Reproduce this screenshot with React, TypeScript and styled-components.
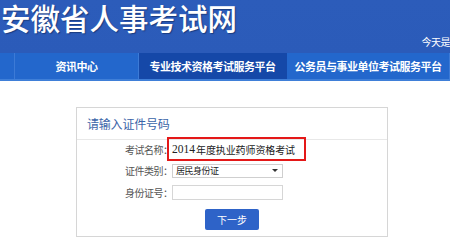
import React from "react";
import styled, { createGlobalStyle } from "styled-components";

const Global = createGlobalStyle`
  html, body { margin: 0; padding: 0; background: #fff; }
  body { width: 450px; height: 249px; overflow: hidden; font-family: "Noto Sans CJK SC", "Noto Sans", sans-serif; }
`;

const Header = styled.div`
  height: 53px;
  background: linear-gradient(180deg, #2c5cba 0%, #2b5bb9 100%);
  position: relative;
  display: flex;
  align-items: flex-start;
`;

const Title = styled.div`
  margin: 0 0 0 1px;
  font-size: 29.5px;
  line-height: 35px;
  color: #fff;
  font-weight: 500;
  text-shadow: 1px 1px 1px #1b3c80;
  white-space: nowrap;
`;

const DateText = styled.div`
  position: absolute;
  right: 0;
  top: 36px;
  font-size: 10px;
  letter-spacing: -0.5px;
  line-height: 12px;
  color: #fff;
  white-space: nowrap;
`;

const Nav = styled.div`
  height: 26px;
  background: #2367cc;
  border-bottom: 2px solid #3f7fd8;
  display: flex;
  overflow: hidden;
`;

const NavItem = styled.div<{ $w: number; $active?: boolean }>`
  flex: 0 0 ${(p) => p.$w}px;
  height: 26px;
  display: flex;
  align-items: center;
  justify-content: center;
  font-size: 11px;
  letter-spacing: -0.5px;
  font-weight: 700;
  color: #fff;
  white-space: nowrap;
  background: ${(p) => (p.$active ? "#1548a8" : "transparent")};
  border-right: 1px solid ${(p) => (p.$active ? "#1548a8" : "#3c7ad6")};
  box-sizing: border-box;
`;

const Main = styled.div`
  padding: 26px 0 0 76px;
`;

const Panel = styled.div`
  width: 312px;
  height: 130px;
  border: 1px solid #d6d6d6;
  box-sizing: border-box;
  background: #fff;
`;

const PanelHead = styled.div`
  height: 31px;
  border-bottom: 1px solid #e8e8e8;
  display: flex;
  align-items: center;
  padding-left: 10px;
  font-size: 12px;
  letter-spacing: -0.2px;
  color: #3a64a8;
`;

const Form = styled.div`
  display: grid;
  grid-template-columns: 90px auto;
`;

const Label = styled.div<{ $h: number; $top?: number }>`
  height: ${(p) => p.$h}px;
  margin-top: ${(p) => p.$top ?? 0}px;
  display: flex;
  align-items: center;
  padding-left: 48px;
  font-size: 10px;
  letter-spacing: -0.5px;
  color: #555;
  white-space: nowrap;
`;

const Field = styled.div<{ $h: number; $top?: number }>`
  height: ${(p) => p.$h}px;
  margin-top: ${(p) => p.$top ?? 0}px;
  display: flex;
  align-items: center;
`;

const ExamName = styled.div`
  width: 139px;
  height: 24px;
  border: 2px solid #e41818;
  box-sizing: border-box;
  padding: 0 0 0 3px;
  display: flex;
  align-items: center;
  font-family: "Liberation Serif", "Noto Sans CJK SC", serif;
  font-size: 11.5px;
  color: #222;
  white-space: nowrap;
`;

const Cjk = styled.span`
  font-family: "Noto Sans CJK SC", sans-serif;
  font-size: 10px;
  letter-spacing: -0.1px;
  margin-left: 1px;
`;

const Select = styled.div`
  margin-left: 5px;
  width: 111px;
  height: 14px;
  border: 1px solid #cfcfcf;
  box-sizing: border-box;
  display: flex;
  align-items: center;
  justify-content: space-between;
  padding: 0 4px 0 3px;
  font-size: 9px;
  letter-spacing: -0.5px;
  color: #222;
  white-space: nowrap;
`;

const Arrow = styled.span`
  width: 0;
  height: 0;
  border-left: 3px solid transparent;
  border-right: 3px solid transparent;
  border-top: 3px solid #333;
`;

const Input = styled.div`
  margin-left: 5px;
  width: 111px;
  height: 15px;
  border: 1px solid #d6d6d6;
  box-sizing: border-box;
`;

const ButtonRow = styled.div`
  display: flex;
  padding-left: 128px;
  padding-top: 5px;
`;

const Button = styled.div`
  width: 54px;
  height: 21px;
  background: #2e63c8;
  border-radius: 2px;
  color: #fff;
  font-size: 10px;
  display: flex;
  align-items: center;
  justify-content: center;
`;

export default function App() {
  return (
    <>
      <Global />
      <Header>
        <Title>安徽省人事考试网</Title>
        <DateText>今天是</DateText>
      </Header>
      <Nav>
        <NavItem $w={15} />
        <NavItem $w={124}>资讯中心</NavItem>
        <NavItem $w={148} $active>专业技术资格考试服务平台</NavItem>
        <NavItem $w={163}>公务员与事业单位考试服务平台</NavItem>
      </Nav>
      <Main>
        <Panel>
          <PanelHead>请输入证件号码</PanelHead>
          <Form>
            <Label $h={24} $top={-3}>考试名称：</Label>
            <Field $h={24} $top={-3}>
              <ExamName>
                2014<Cjk>年度执业药师资格考试</Cjk>
              </ExamName>
            </Field>
            <Label $h={19}>证件类别：</Label>
            <Field $h={19}>
              <Select>
                居民身份证
                <Arrow />
              </Select>
            </Field>
            <Label $h={24}>身份证号：</Label>
            <Field $h={24}>
              <Input />
            </Field>
          </Form>
          <ButtonRow>
            <Button>下一步</Button>
          </ButtonRow>
        </Panel>
      </Main>
    </>
  );
}
